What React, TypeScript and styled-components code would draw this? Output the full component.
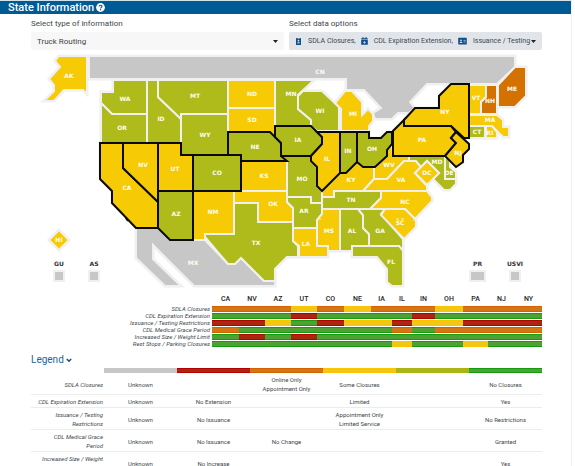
import React from "react";
import styled, { createGlobalStyle } from "styled-components";

const GREEN = "#aebb1a";
const YELLOW = "#f7ca06";
const ORANGE = "#d47200";
const GRAY = "#c7c7c7";

const GlobalStyle = createGlobalStyle`
  *, *::before, *::after { box-sizing: border-box; }
  body {
    margin: 0;
    background: #ffffff;
    color: #41474c;
    font-family: Roboto, "Liberation Sans", sans-serif;
    font-size: 6px;
    line-height: 9px;
  }
`;

const Page = styled.div`
  height: 100vh;
  overflow: hidden;
  margin-right: 3px;
  border-top: 1px solid #d3e3ee;
  border-right: 1px solid #f1f1f1;
`;

const TitleBar = styled.header`
  display: flex;
  align-items: center;
  gap: 2px;
  height: 13px;
  padding-left: 8px;
  background: #005a94;
  color: #ffffff;
`;

const Title = styled.h1`
  margin: 0;
  font-size: 11px;
  line-height: 13px;
  font-weight: 500;
`;

const HelpButton = styled.button`
  display: flex;
  padding: 0;
  border: 0;
  background: none;
`;

const Content = styled.main`
  padding: 5px 29px 0 31px;
`;

const Filters = styled.form`
  display: grid;
  grid-template-columns: 1fr 1fr;
  gap: 5px;
`;

const Field = styled.div`
  display: flex;
  flex-direction: column;
  gap: 4px;
  min-width: 0;
`;

const FieldLabel = styled.label`
  font-size: 8px;
  line-height: 9px;
`;

const SelectBox = styled.div`
  display: flex;
  align-items: center;
  height: 18px;
  padding-right: 6px;
  border-radius: 2px;
  background: #f7f7f7;
`;

const Select = styled.select`
  flex: 1;
  min-width: 0;
  height: 18px;
  padding: 0 0 0 6px;
  border: 0;
  appearance: none;
  background: transparent;
  color: #3f454a;
  font: inherit;
  font-size: 8px;
`;

const MultiSelect = styled.button`
  display: flex;
  align-items: center;
  height: 18px;
  padding: 0 6px;
  border: 0;
  border-radius: 2px;
  background: #e1e5ea;
  color: #41474c;
  font: inherit;
  font-size: 7px;
  text-align: left;
`;

const Chosen = styled.span`
  display: flex;
  flex: 1;
  gap: 5px;
  min-width: 0;
  overflow: hidden;
  white-space: nowrap;
`;

const ChosenItem = styled.span`
  display: flex;
  flex: none;
  align-items: center;
  gap: 6px;
`;

const MapDrawing = styled.svg`
  display: block;
  width: 100%;
  height: auto;
  margin-top: 2px;
`;

const StatusTable = styled.table`
  width: 100%;
  margin-top: 4px;
  border-collapse: collapse;
  table-layout: fixed;
`;

const StateHead = styled.th`
  height: 11px;
  padding: 1px 0;
  color: #222222;
  font-size: 7px;
  font-weight: 500;
  line-height: 9px;
`;

const StatusLabel = styled.th`
  padding: 0 2px 0 0;
  font-style: italic;
  font-weight: 400;
  line-height: 7px;
  text-align: right;
  white-space: nowrap;
`;

const edge = { g: "#149c10", r: "#b30000", o: "#d56000", y: "#fac400", k: "#c7c7c7", l: "#aab40c" };
const core = { g: "#4ea233", r: "#a9270e", o: "#d47614", y: "#f2c714", k: "#c7c7c7", l: "#a9b520" };
type Tone = keyof typeof edge;

const Bar = styled.div<{ $tone: Tone; $slim?: boolean }>`
  height: ${(p) => (p.$slim ? 5 : 6)}px;
  background: ${(p) => core[p.$tone]};
  border-top: 1px solid ${(p) => edge[p.$tone]};
  border-bottom: 1px solid ${(p) => edge[p.$tone]};
`;

const BarCell = styled.td`
  height: 7px;
  padding: 0;
`;

const LegendTitle = styled.h2`
  display: flex;
  align-items: center;
  gap: 2px;
  margin: 7px 0 2px;
  color: #1c6797;
  font-size: 10px;
  line-height: 12px;
  font-weight: 400;
`;

const LegendTable = styled.table`
  width: 100%;
  border-collapse: separate;
  border-spacing: 0;
  table-layout: fixed;
`;

const LegendBarCell = styled.th`
  padding: 0;
`;

const LegendLabel = styled.th`
  padding: 2px 1px 1px 0;
  border-bottom: 1px solid #ececec;
  font-style: italic;
  font-weight: 400;
  text-align: right;
`;

const LegendCell = styled.td`
  padding: 2px 0 1px;
  border-bottom: 1px solid #ececec;
  text-align: center;
  white-space: pre-line;
`;

type Region = { id: string; fill: string; at: [number, number]; pts: string; picked?: boolean };

const regions: Region[] = [
  { id: "CN", fill: GRAY, at: [320, 72], pts: "89,56 515,56 515,67 497,84 427,84 410,102 415,108 409,113 398,113 392,119 375,119 373,113 381,108 364,90 346,90 346,79 89,79" },
  { id: "MX", fill: GRAY, at: [193, 263], pts: "136,228 158,228 170,240 205,240 228,264 235,264 241,258 264,281 275,281 275,286 194,286 153,245 153,259 181,286 165,286 136,258" },
  { id: "AK", fill: YELLOW, at: [69, 76], pts: "59,56 87,56 87,94 83,90 64,90 54,101 44,101 54,91 54,85 49,79 60,67 55,61" },
  { id: "WA", fill: GREEN, at: [125, 99], pts: "113,80 147,80 147,114 112,114 101,103 101,92 113,92" },
  { id: "OR", fill: GREEN, at: [122, 128], pts: "101,103 112,114 147,114 147,143 101,143" },
  { id: "ID", fill: GREEN, at: [161, 119], pts: "147,80 158,80 158,97 181,119 181,143 147,143" },
  { id: "MT", fill: GREEN, at: [195, 96], pts: "158,80 228,80 228,114 181,114 181,119 158,97" },
  { id: "WY", fill: GREEN, at: [205, 135], pts: "181,114 228,114 228,155 181,155" },
  { id: "ND", fill: YELLOW, at: [252, 94], pts: "228,80 275,80 275,108 228,108" },
  { id: "SD", fill: YELLOW, at: [252, 120], pts: "228,108 275,108 275,137 270,132 228,132" },
  { id: "MN", fill: GREEN, at: [291, 94], pts: "275,80 314,80 298,95 298,109 311,120 311,126 275,126" },
  { id: "WI", fill: GREEN, at: [320, 111], pts: "303,91 322,91 339,107 339,131 317,131 311,126 311,120 298,109 298,96" },
  { id: "MI", fill: YELLOW, at: [353, 114], pts: "345,91 352,91 362,102 362,115 368,109 373,114 373,121 369,126 369,131 341,131 341,109 335,103" },
  { id: "KS", fill: YELLOW, at: [264, 176], pts: "241,161 287,161 287,191 241,191" },
  { id: "MO", fill: GREEN, at: [302, 179], pts: "281,156 311,156 311,161 317,167 317,186 322,191 322,203 311,203 311,197 287,197 287,161" },
  { id: "NM", fill: YELLOW, at: [213, 212], pts: "193,191 234,191 234,234 205,234 205,240 193,240" },
  { id: "OK", fill: YELLOW, at: [273, 204], pts: "234,191 287,191 287,202 293,208 293,222 258,222 258,203 234,203" },
  { id: "TX", fill: GREEN, at: [256, 243], pts: "234,203 258,203 258,222 293,222 293,241 298,246 298,257 287,257 275,269 275,281 264,281 241,258 235,264 228,264 205,237 205,234 234,234" },
  { id: "AR", fill: GREEN, at: [304, 211], pts: "287,197 311,197 311,203 322,203 322,214 317,220 317,228 293,228 293,208 287,202" },
  { id: "LA", fill: YELLOW, at: [306, 244], pts: "293,228 317,228 317,246 328,246 328,257 299,257 299,246 293,241" },
  { id: "MS", fill: YELLOW, at: [329, 231], pts: "322,209 340,209 340,251 328,251 328,246 317,246 317,220 322,214" },
  { id: "AL", fill: GREEN, at: [352, 231], pts: "340,209 358,209 363,215 363,228 369,234 369,246 352,246 352,251 340,251" },
  { id: "GA", fill: GREEN, at: [380, 231], pts: "358,209 385,209 381,214 403,239 403,251 399,246 369,246 369,234 363,228 363,215" },
  { id: "FL", fill: GREEN, at: [391, 262], pts: "352,246 399,246 403,251 403,286 392,286 387,282 387,269 377,257 352,257" },
  { id: "TN", fill: GREEN, at: [351, 200], pts: "322,197 334,197 334,191 381,191 381,198 370,209 322,209" },
  { id: "KY", fill: YELLOW, at: [351, 180], pts: "322,191 340,173 346,173 357,162 363,167 374,167 374,179 363,191 334,191 334,197 322,197" },
  { id: "WV", fill: YELLOW, at: [389, 165], pts: "374,167 387,156 387,150 392,144 393,156 409,156 409,161 404,161 387,179 374,179" },
  { id: "VA", fill: YELLOW, at: [401, 180], pts: "374,179 387,179 404,161 416,161 421,167 415,173 427,186 427,191 363,191" },
  { id: "NC", fill: YELLOW, at: [405, 202], pts: "381,191 427,191 432,197 432,201 415,219 405,209 370,209 381,198" },
  { id: "SC", fill: YELLOW, at: [400, 223], pts: "385,209 405,209 416,220 416,227 404,239 381,215" },
  { id: "MD", fill: GREEN, at: [437, 162], pts: "409,156 445,156 445,179 456,179 456,184 450,190 444,190 433,179 439,173 427,161 421,167 416,161 409,161" },
  { id: "DE", fill: GREEN, at: [449, 173], pts: "445,156 450,160 450,167 456,172 456,179 445,179" },
  { id: "DC", fill: YELLOW, at: [427, 173], pts: "427,161 439,173 427,185 415,173" },
  { id: "VT", fill: YELLOW, at: [476, 98], pts: "469,85 486,85 486,97 481,102 481,114 469,114" },
  { id: "NH", fill: ORANGE, at: [490, 101], pts: "486,85 497,85 497,114 481,114 481,102 486,97" },
  { id: "ME", fill: ORANGE, at: [512, 89], pts: "515,67 526,67 526,96 515,107 498,107 498,85" },
  { id: "MA", fill: YELLOW, at: [490, 120], pts: "469,115 497,115 503,120 503,127 509,127 509,137 503,137 492,126 469,126" },
  { id: "CT", fill: GREEN, at: [477, 132], pts: "469,126 485,126 485,138 469,138" },
  { id: "RI", fill: YELLOW, at: [490, 133], pts: "486,126 492,126 497,132 497,138 486,138" },
  { id: "HI", fill: YELLOW, at: [59, 240], pts: "59,230 69,240 59,250 49,240" },
  { id: "CA", fill: YELLOW, at: [127, 188], pts: "100,143 123,143 123,168 158,202 158,228 136,228 112,203 112,191 100,179", picked: true },
  { id: "NV", fill: YELLOW, at: [143, 165], pts: "123,143 158,143 158,202 123,168", picked: true },
  { id: "AZ", fill: GREEN, at: [176, 214], pts: "158,191 193,191 193,240 170,240 158,228", picked: true },
  { id: "UT", fill: YELLOW, at: [175, 169], pts: "158,143 181,143 181,155 193,155 193,191 158,191", picked: true },
  { id: "CO", fill: GREEN, at: [217, 173], pts: "193,155 241,155 241,191 193,191", picked: true },
  { id: "NE", fill: GREEN, at: [255, 147], pts: "228,132 270,132 281,143 281,156 287,161 241,161 241,155 228,155", picked: true },
  { id: "IA", fill: GREEN, at: [298, 140], pts: "275,126 311,126 322,137 322,144 311,156 281,156 281,143 275,137", picked: true },
  { id: "IL", fill: YELLOW, at: [327, 159], pts: "317,132 340,132 340,173 322,191 317,186 317,167 311,161 311,156 322,144 322,137", picked: true },
  { id: "IN", fill: GREEN, at: [348, 151], pts: "340,132 357,132 357,162 346,173 340,173", picked: true },
  { id: "OH", fill: GREEN, at: [372, 149], pts: "357,132 369,132 369,138 381,138 387,132 392,132 392,144 387,150 387,156 375,167 363,167 357,162", picked: true },
  { id: "NY", fill: YELLOW, at: [445, 112], pts: "404,126 404,120 415,108 439,108 439,96 451,84 469,84 469,138 464,138 451,126", picked: true },
  { id: "PA", fill: YELLOW, at: [422, 140], pts: "393,131 404,120 404,126 451,126 456,132 451,138 456,143 445,156 393,156", picked: true },
  { id: "NJ", fill: YELLOW, at: [458, 153], pts: "456,132 469,144 469,149 463,155 463,162 456,167 445,156 456,143 451,138", picked: true },
];

const territories = [
  { id: "GU", x: 54, w: 10 },
  { id: "AS", x: 89, w: 10 },
  { id: "PR", x: 470, w: 15 },
  { id: "USVI", x: 510, w: 10 },
];

const MapText = styled.text<{ $dark?: boolean }>`
  fill: ${(p) => (p.$dark ? "#333333" : "#fffdf0")};
  font-family: "DejaVu Sans", sans-serif;
  font-size: 6px;
  font-weight: 700;
  text-anchor: middle;
`;

function StateMap() {
  return (
    <MapDrawing viewBox="31 52 511 238" role="img" aria-label="Map of states">
      {regions.map((r) => (
        <polygon key={r.id} points={r.pts} fill="none" stroke="#f0f0f0" strokeWidth="3" />
      ))}
      {regions.map((r) => (
        <polygon key={r.id} points={r.pts} fill={r.fill} stroke="#f0f0f0" strokeWidth="2" />
      ))}
      {regions.filter((r) => r.picked).map((r) => (
        <polygon key={r.id} points={r.pts} fill={r.fill} stroke="#0a0a00" strokeWidth="2" />
      ))}
      <path d="M396 219h3M401 219h3M413 220h4M318 219h3" stroke="#f5efcf" strokeWidth="1" />
      <path d="M126 218l2 3" stroke="#0a0a00" strokeWidth="2" />
      {regions.map((r) => (
        <MapText key={r.id} x={r.at[0]} y={r.at[1] + 2}>{r.id}</MapText>
      ))}
      {territories.map((t) => (
        <g key={t.id}>
          <rect x={t.x} y="271" width={t.w} height="10" fill={GRAY} stroke="#f0f0f0" strokeWidth="2" />
          <MapText $dark x={t.x + t.w / 2} y="266">{t.id}</MapText>
        </g>
      ))}
    </MapDrawing>
  );
}

const states: [string, number][] = [
  ["CA", 27], ["NV", 26], ["AZ", 26], ["UT", 26], ["CO", 27], ["NE", 27], ["IA", 21],
  ["IL", 20], ["IN", 23], ["OH", 28], ["PA", 25], ["NJ", 27], ["NY", 27],
];

const statuses: [string, string][] = [
  ["SDLA Closures", "oooyoyoooyooo"],
  ["CDL Expiration Extension", "gggrggggrgggg"],
  ["Issuance / Testing Restrictions", "rrygryyryyrrr"],
  ["CDL Medical Grace Period", "oggggggogoooo"],
  ["Increased Size / Weight Limit", "grgrggggggggg"],
  ["Rest Stops / Parking Closures", "gggggggyggygg"],
];

const legendTones: Tone[] = ["k", "r", "o", "y", "l", "g"];

const legend: [string, string[]][] = [
  ["SDLA Closures", ["Unknown", "", "Online Only\nAppointment Only", "Some Closures", "", "No Closures"]],
  ["CDL Expiration Extension", ["Unknown", "No Extension", "", "Limited", "", "Yes"]],
  ["Issuance / Testing\nRestrictions", ["Unknown", "No Issuance", "", "Appointment Only\nLimited Service", "", "No Restrictions"]],
  ["CDL Medical Grace\nPeriod", ["Unknown", "No Issuance", "No Change", "", "", "Granted"]],
  ["Increased Size / Weight\nLimit", ["Unknown", "No Increase", "", "", "", "Yes"]],
];

const WrappedLabel = styled.span`
  white-space: pre;
`;

const Corner = styled.td`
  padding: 0;
`;

const Caret = () => (
  <svg width="5" height="3" viewBox="0 0 5 3" aria-hidden="true">
    <path d="M0 0h5L2.5 3z" fill="#222222" />
  </svg>
);

const BadgeIcon = () => (
  <svg width="7" height="8" viewBox="0 0 7 8" aria-hidden="true">
    <rect x="1" y="1" width="5" height="7" rx=".6" fill="#0d4f8b" />
    <path d="M2.5 1.5h2" stroke="#e1e5ea" strokeWidth=".6" />
    <circle cx="3.5" cy="3.6" r=".9" fill="#e1e5ea" />
    <path d="M2 6.2c0-1.4 3-1.4 3 0z" fill="#e1e5ea" />
  </svg>
);

const CalendarIcon = () => (
  <svg width="7" height="8" viewBox="0 0 7 8" aria-hidden="true">
    <path d="M.2 1.2h1.2V.2h1.2v1h1.8v-1h1.2v1h1.2v1.4H.2zM.2 3h6.6v4.8H.2z" fill="#0d4f8b" />
    <path d="M3.5 4v2.8M2.1 5.4h2.8" stroke="#e1e5ea" strokeWidth=".7" />
  </svg>
);

const CardIcon = () => (
  <svg width="9" height="8" viewBox="0 0 9 8" aria-hidden="true">
    <rect x=".2" y=".8" width="8.6" height="6.6" rx=".6" fill="#0d4f8b" />
    <path d="M5.5 3.4h2.2M5.5 5h2.2" stroke="#e1e5ea" strokeWidth=".6" />
    <circle cx="3" cy="3.3" r=".9" fill="#e1e5ea" />
    <path d="M1.6 5.9c0-1.5 2.8-1.5 2.8 0z" fill="#e1e5ea" />
  </svg>
);

export default function App() {
  return (
    <>
      <GlobalStyle />
      <Page>
        <TitleBar>
          <Title>State Information</Title>
          <HelpButton type="button" aria-label="Help">
            <svg width="9" height="9" viewBox="0 0 9 9" aria-hidden="true">
              <circle cx="4.5" cy="4.5" r="4.4" fill="#ffffff" />
              <path d="M3.1 3.6c0-1.9 2.9-1.8 2.9-.2 0 1-1.4 1-1.4 2" fill="none" stroke="#005a94" strokeWidth="1.1" />
              <circle cx="4.6" cy="6.8" r=".7" fill="#005a94" />
            </svg>
          </HelpButton>
        </TitleBar>
        <Content>
          <Filters>
            <Field>
              <FieldLabel htmlFor="info-type">Select type of information</FieldLabel>
              <SelectBox>
                <Select id="info-type" defaultValue="Truck Routing">
                  <option>Truck Routing</option>
                </Select>
                <Caret />
              </SelectBox>
            </Field>
            <Field>
              <FieldLabel htmlFor="data-options">Select data options</FieldLabel>
              <MultiSelect type="button" id="data-options">
                <Chosen>
                  <ChosenItem><BadgeIcon />SDLA Closures,</ChosenItem>
                  <ChosenItem><CalendarIcon />CDL Expiration Extension,</ChosenItem>
                  <ChosenItem><CardIcon />Issuance / Testing Restrictions</ChosenItem>
                </Chosen>
                <Caret />
              </MultiSelect>
            </Field>
          </Filters>
          <StateMap />
          <StatusTable>
            <colgroup>
              <col style={{ width: `${(181 / 511) * 100}%` }} />
              {states.map(([name, w]) => (
                <col key={name} style={{ width: `${(w / 511) * 100}%` }} />
              ))}
            </colgroup>
            <thead>
              <tr>
                <Corner />
                {states.map(([name]) => <StateHead key={name} scope="col">{name}</StateHead>)}
              </tr>
            </thead>
            <tbody>
              {statuses.map(([label, tones]) => (
                <tr key={label}>
                  <StatusLabel scope="row">{label}</StatusLabel>
                  {tones.split("").map((t, i) => (
                    <BarCell key={i}><Bar $tone={t as Tone} /></BarCell>
                  ))}
                </tr>
              ))}
            </tbody>
          </StatusTable>
          <LegendTitle>
            Legend
            <svg width="6" height="5" viewBox="0 0 6 5" aria-hidden="true">
              <path d="M.8 1l2.2 2.2L5.2 1" fill="none" stroke="#0d4f8b" strokeWidth="1.5" />
            </svg>
          </LegendTitle>
          <LegendTable>
            <thead>
              <tr>
                <Corner />
                {legendTones.map((t) => (
                  <LegendBarCell key={t}><Bar $slim $tone={t} /></LegendBarCell>
                ))}
              </tr>
            </thead>
            <tbody>
              {legend.map(([label, cells]) => (
                <tr key={label}>
                  <LegendLabel scope="row"><WrappedLabel>{label}</WrappedLabel></LegendLabel>
                  {cells.map((c, i) => <LegendCell key={i}>{c}</LegendCell>)}
                </tr>
              ))}
            </tbody>
          </LegendTable>
        </Content>
      </Page>
    </>
  );
}
